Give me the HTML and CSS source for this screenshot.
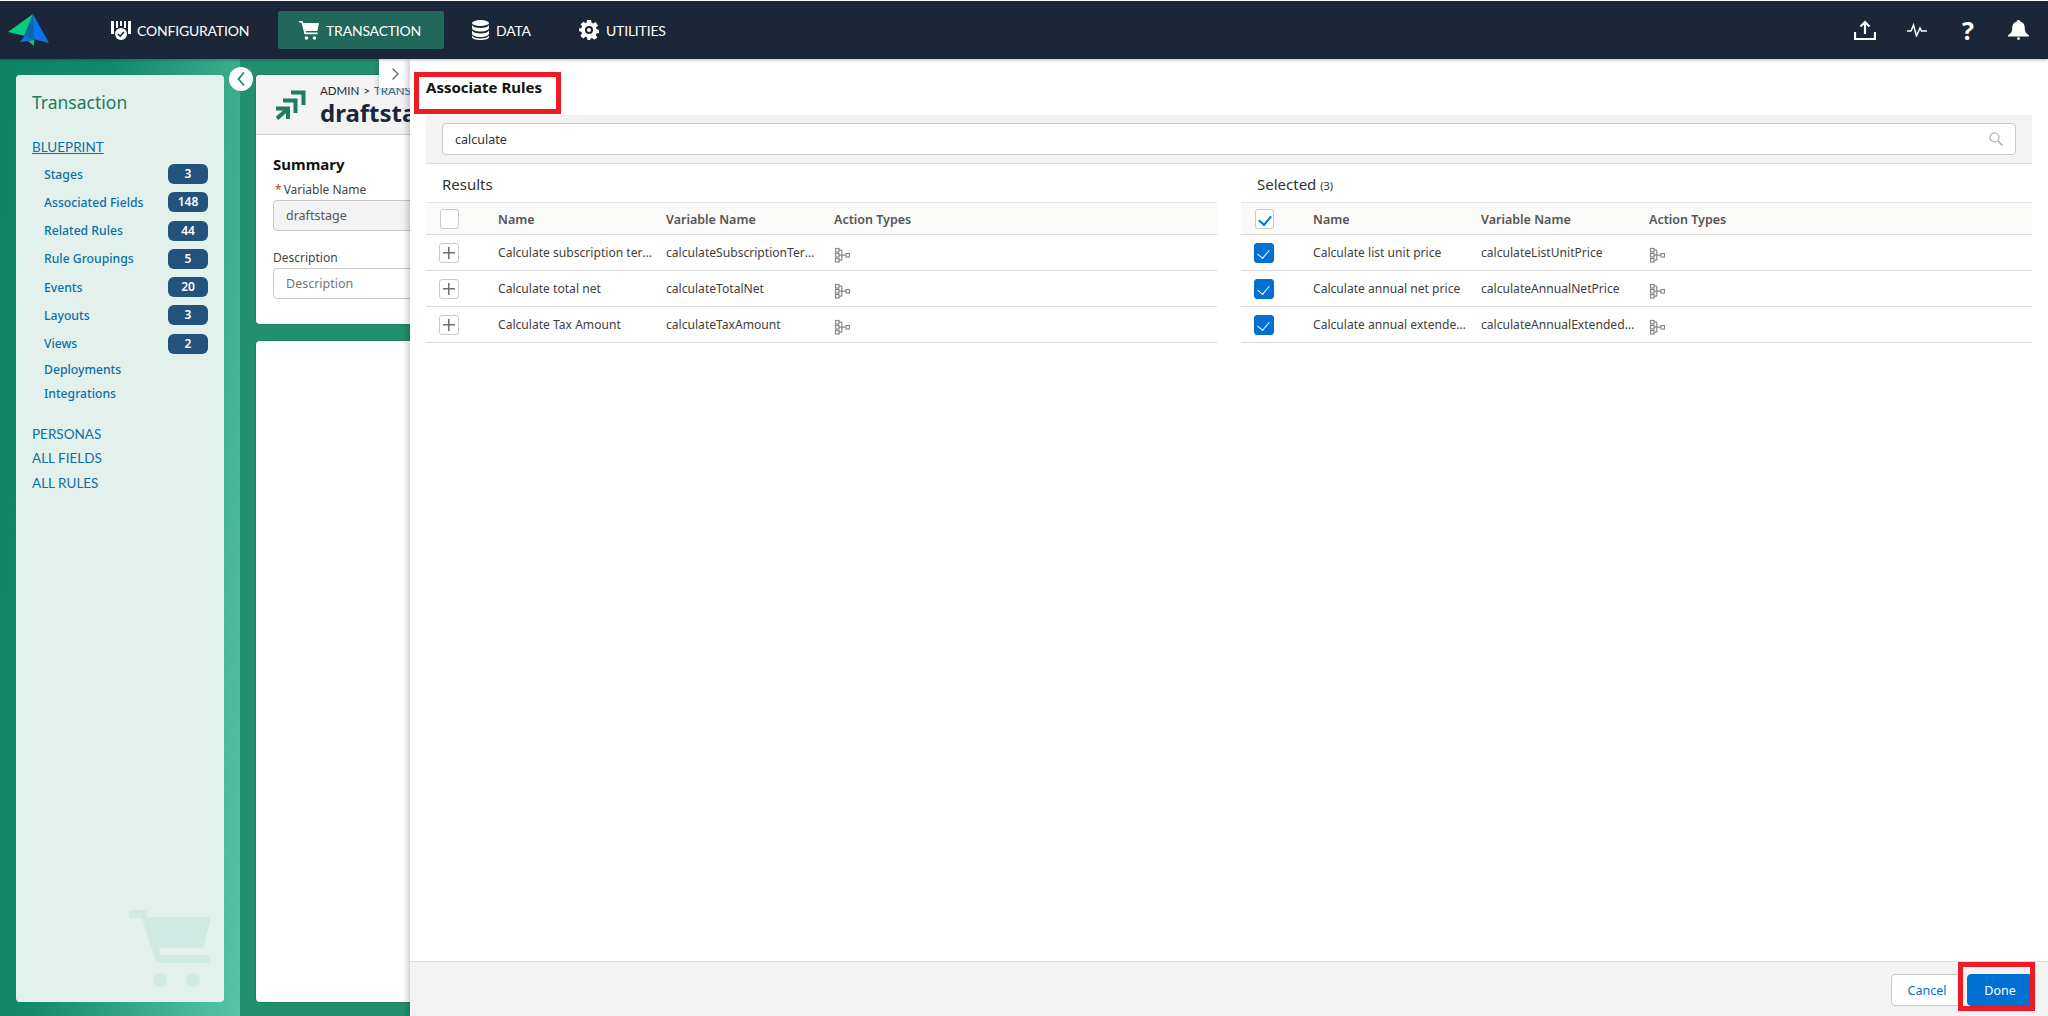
FILE: index.html
```html
<!DOCTYPE html>
<html lang="en">
<head>
  <meta charset="UTF-8" />
  <title>Associate Rules</title>
  <link rel="stylesheet" href="styles.css">
</head>
<body>

  <!-- Top bar -->
  <header class="topbar">
    <svg class="logo" width="42" height="33" viewBox="8 14 42 33">
      <polygon points="33,14 8,32 25,36" fill="#0dcb7d"/>
      <polygon points="33,14 49,43 33,39" fill="#0b72ee"/>
      <polygon points="33,14 24,36 25,38 33,42 34,39" fill="#0a67a3"/>
      <polygon points="25,36 20,42 28,41 33,39" fill="#0b72ee"/>
      <polygon points="28,41 34,46 34,40" fill="#0dcb7d"/>
    </svg>
    <nav class="main-nav">
      <a class="nav-item nav-config">
        <svg width="20" height="19" viewBox="0 0 20 19">
          <path fill="#fff" d="M0 0h3v13H0zM17 0h3v13h-3zM5 0h2v7H5zM9 0h2v5H9zM13 0h2v7h-2z"/>
          <circle cx="10" cy="13" r="6" fill="#fff"/>
          <path d="M7 13l2.200 2.200L13 11" fill="none" stroke="#1b2739" stroke-width="1.600"/>
        </svg>
        CONFIGURATION
      </a>
      <a class="nav-item nav-active">
        <svg width="20" height="19" viewBox="0 0 20 19">
          <path fill="#fff" d="M0 0h3.600l.7 2H20l-1.600 8H6.600l.4 1.600h11.600v1.600H5.600L2.400 1.600H0z"/>
          <circle cx="7.500" cy="17" r="1.800" fill="#fff"/>
          <circle cx="15.500" cy="17" r="1.800" fill="#fff"/>
        </svg>
        TRANSACTION
      </a>
      <a class="nav-item nav-data">
        <svg width="17" height="20" viewBox="0 0 17 20">
          <ellipse cx="8.500" cy="3" rx="8.500" ry="3" fill="#fff"/>
          <path fill="#fff" d="M0 5c1 2 4 3 8.500 3S16 7 17 5v3c0 2-4 3.500-8.500 3.500S0 10 0 8zM0 10.500c1 2 4 3 8.500 3s7.500-1 8.500-3v3c0 2-4 3.500-8.500 3.500S0 15.500 0 13.500zM0 15.500c1 2 4 3 8.500 3s7.500-1 8.500-3V17c0 2-4 3-8.500 3S0 19 0 17z"/>
        </svg>
        DATA
      </a>
      <a class="nav-item nav-util">
        <svg width="20" height="20" viewBox="0 0 20 20">
          <path fill="#fff" fill-rule="evenodd" d="M8 0h4l.6 2.800 1.500.7L16.600 2l2.400 3.400-2 2 .3 1.600L20 10v3l-2.700.6-.6 1.500 1.600 2.400-3 2.200-2-1.800-1.500.4L11 20H8.600l-.7-2.700-1.500-.5-2.200 1.700-2.800-2.600 1.600-2.300-.6-1.500L0 11V8.500l2.500-.6.600-1.500-1.500-2.200L4.400 1.700l2.200 1.500 1-.4zM10 6a4 4 0 1 0 0 8 4 4 0 0 0 0-8zm0 2a2 2 0 1 1 0 4 2 2 0 0 1 0-4z"/>
        </svg>
        UTILITIES
      </a>
    </nav>
    <div class="top-actions">
      <svg width="22" height="20" viewBox="0 0 22 20">
        <path d="M11 14V2M6.500 6.500L11 2l4.500 4.500M1 12v7h20v-7" fill="none" stroke="#fff" stroke-width="2.200"/>
      </svg>
      <svg width="20" height="14" viewBox="0 0 20 14">
        <path d="M0 8h4l2.500-6 3 11 3.500-8 1.500 3H20" fill="none" stroke="#fff" stroke-width="1.500"/>
      </svg>
      <span class="help-mark">?</span>
      <svg width="21" height="20" viewBox="0 0 21 20">
        <path fill="#fff" d="M10.500 0c1 0 1.700.7 1.800 1.500 3 .8 4.500 3.200 4.500 6.500 0 3.500 1 5 4.200 7.500v1H0v-1C3.200 13 4.200 11.500 4.200 8c0-3.300 1.500-5.700 4.500-6.500C8.800.7 9.500 0 10.500 0z"/>
        <circle cx="10.500" cy="18.600" r="1.400" fill="#fff"/>
      </svg>
    </div>
  </header>

  <div class="page">
    <!-- Left column -->
    <aside class="side-wrap">
      <div class="side-panel">
        <h2 class="side-title">Transaction</h2>
        <a class="side-head side-head-on">BLUEPRINT</a>
        <ul class="side-list">
          <li><a>Stages</a><span class="count">3</span></li>
          <li><a>Associated Fields</a><span class="count">148</span></li>
          <li><a>Related Rules</a><span class="count">44</span></li>
          <li><a>Rule Groupings</a><span class="count">5</span></li>
          <li><a>Events</a><span class="count">20</span></li>
          <li><a>Layouts</a><span class="count">3</span></li>
          <li><a>Views</a><span class="count">2</span></li>
        </ul>
        <a class="side-link">Deployments</a>
        <a class="side-link">Integrations</a>
        <div class="side-heads">
          <a class="side-head">PERSONAS</a>
          <a class="side-head">ALL FIELDS</a>
          <a class="side-head">ALL RULES</a>
        </div>
        <svg class="side-cart" width="82" height="77" viewBox="0 0 82 77">
          <path fill="#cfeae2" d="M3 0h11a4 4 0 0 1 4 3l1 4h63l-7 28a4 4 0 0 1-4 3H30l2 7h45a4 4 0 0 1 0 8H32a6 6 0 0 1-6-4L13 8H3a4 4 0 0 1 0-8z"/>
          <circle cx="31" cy="70" r="7" fill="#cfeae2"/>
          <circle cx="64" cy="70" r="7" fill="#cfeae2"/>
        </svg>
      </div>
    </aside>

    <!-- Blueprint stage, mostly behind the drawer -->
    <main class="content">
      <section class="card card-top">
        <div class="card-head">
          <svg width="31" height="31" viewBox="0 0 31 31">
            <path d="M16 3.500H28.500V16M8 11.500H20.500V24M1 19.500H13V30M2 29.500L12 20.500" fill="none" stroke="#1f7a62" stroke-width="4"/>
          </svg>
          <div class="head-text">
            <div class="crumbs"><span>ADMIN</span><i>&gt;</i><a>TRANSACTION</a></div>
            <h1 class="stage-name">draftstage</h1>
          </div>
        </div>
        <div class="card-body">
          <h3 class="summary">Summary</h3>
          <label class="field-label first"><span class="req">*</span>Variable Name</label>
          <input class="field field-off" value="draftstage" readonly>
          <label class="field-label">Description</label>
          <input class="field" placeholder="Description">
        </div>
      </section>
      <section class="card card-bottom"></section>
    </main>
  </div>

  <!-- Drawer -->
  <button class="collapse-btn">
    <svg width="12" height="18" viewBox="0 0 12 18"><path d="M9 2.500L3.500 9 9 15.500" fill="none" stroke="#1f8f72" stroke-width="1.800"/></svg>
  </button>
  <div class="drawer-tab">
    <svg width="10" height="14" viewBox="0 0 10 14"><path d="M2.500 1.500L8 7l-5.500 5.500" fill="none" stroke="#666" stroke-width="1.300"/></svg>
  </div>
  <div class="drawer">
    <div class="drawer-title">Associate Rules</div>
    <div class="search-band">
      <div class="search-box">
        <input class="search-input" value="calculate">
        <svg width="14" height="14" viewBox="0 0 14 14">
          <circle cx="5.500" cy="5.500" r="4.500" fill="none" stroke="#b0b0b0" stroke-width="1.200"/>
          <path d="M9 9l4.500 4.500" stroke="#b0b0b0" stroke-width="1.400"/>
        </svg>
      </div>
    </div>
    <div class="lists">
      <div class="list-col">
        <div class="list-title">Results</div>
        <table class="rules">
          <thead>
            <tr><th><span class="check"></span></th><th>Name</th><th>Variable Name</th><th>Action Types</th></tr>
          </thead>
          <tbody>
            <tr>
              <td><span class="plus"></span></td>
              <td><div class="clip">Calculate subscription term length</div></td>
              <td><div class="clip">calculateSubscriptionTermLength</div></td>
              <td><svg class="act" viewBox="0 0 16 16"><use href="#flow"/></svg></td>
            </tr>
            <tr>
              <td><span class="plus"></span></td>
              <td><div class="clip">Calculate total net</div></td>
              <td><div class="clip">calculateTotalNet</div></td>
              <td><svg class="act" viewBox="0 0 16 16"><use href="#flow"/></svg></td>
            </tr>
            <tr>
              <td><span class="plus"></span></td>
              <td><div class="clip">Calculate Tax Amount</div></td>
              <td><div class="clip">calculateTaxAmount</div></td>
              <td><svg class="act" viewBox="0 0 16 16"><use href="#flow"/></svg></td>
            </tr>
          </tbody>
        </table>
      </div>
      <div class="list-col">
        <div class="list-title">Selected <small>(3)</small></div>
        <table class="rules">
          <thead>
            <tr><th><span class="check check-all"></span></th><th>Name</th><th>Variable Name</th><th>Action Types</th></tr>
          </thead>
          <tbody>
            <tr>
              <td><span class="check check-on"></span></td>
              <td><div class="clip">Calculate list unit price</div></td>
              <td><div class="clip">calculateListUnitPrice</div></td>
              <td><svg class="act" viewBox="0 0 16 16"><use href="#flow"/></svg></td>
            </tr>
            <tr>
              <td><span class="check check-on"></span></td>
              <td><div class="clip">Calculate annual net price</div></td>
              <td><div class="clip">calculateAnnualNetPrice</div></td>
              <td><svg class="act" viewBox="0 0 16 16"><use href="#flow"/></svg></td>
            </tr>
            <tr>
              <td><span class="check check-on"></span></td>
              <td><div class="clip">Calculate annual extended price</div></td>
              <td><div class="clip">calculateAnnualExtendedPrice</div></td>
              <td><svg class="act" viewBox="0 0 16 16"><use href="#flow"/></svg></td>
            </tr>
          </tbody>
        </table>
      </div>
    </div>
    <div class="drawer-foot">
      <button class="btn">Cancel</button>
      <button class="btn btn-brand">Done</button>
    </div>
    <!-- Red callouts drawn over the screenshot -->
    <div class="callout callout-title"></div>
    <div class="callout callout-done"></div>
  </div>

  <svg class="defs">
    <defs>
      <g id="flow" fill="none" stroke="#888" stroke-width="1.200">
        <rect x="1.500" y="1.500" width="3.500" height="3.500"/>
        <rect x="1.500" y="6.500" width="3.500" height="3.500"/>
        <rect x="1.500" y="11.500" width="3.500" height="3.500"/>
        <rect x="12" y="6.500" width="3.500" height="3.500"/>
        <path d="M5 8.200H12M7.800 3.200v10M5 3.200h2.800M5 13.200h2.800"/>
      </g>
    </defs>
  </svg>

</body>
</html>
```

FILE: styles.css
```css
* {
  box-sizing: border-box;
}

html, body {
  margin: 0;
  height: 1016px;
  overflow: hidden;
}

body {
  font-family: "Noto Sans", "Open Sans", sans-serif;
  font-size: 13px;
  color: #333;
  background: #fff;
  padding-top: 1px;
  position: relative;
}

.defs {
  position: absolute;
  width: 0;
  height: 0;
}

/* Top bar */
.topbar {
  height: 58px;
  background: #1b2739;
  display: flex;
  align-items: center;
  box-shadow: 0 1px 3px #00000044;
  position: relative;
  z-index: 3;
}

.logo {
  margin-left: 8px;
  flex: none;
}

.main-nav {
  display: flex;
  align-items: center;
  margin-left: 61px;
}

.nav-item {
  display: flex;
  align-items: center;
  gap: 7px;
  height: 38px;
  color: #fff;
  font-family: Lato, "Open Sans", sans-serif;
  font-size: 14px;
  letter-spacing: -0.2px;
}

.nav-config {
  width: 167px;
  gap: 6px;
}

.nav-active {
  width: 166px;
  padding-left: 21px;
  background: #21675a;
  border-radius: 2px;
}

.nav-data {
  width: 107px;
  margin-left: 28px;
}

.top-actions {
  margin-left: auto;
  margin-right: 19px;
  display: flex;
  align-items: center;
  gap: 31px;
}

.help-mark {
  color: #fff;
  font-family: "Open Sans", sans-serif;
  font-weight: 700;
  font-size: 25px;
  line-height: 20px;
  width: 15px;
  margin-left: 4px;
}

/* Page under the bar */
.page {
  display: flex;
  height: 957px;
}

.side-wrap {
  width: 240px;
  flex: none;
  padding: 16px 16px 14px;
  background: linear-gradient(95deg, #0e8464 0%, #128a6a 35%, #57c5a5 100%);
}

.side-panel {
  height: 100%;
  background: #e2f1ec;
  border-radius: 4px;
  padding: 15px 16px 0;
  position: relative;
}

.side-title {
  margin: 0 0 22px;
  font-size: 17.500px;
  line-height: 24px;
  font-weight: 400;
  color: #1f7a5e;
}

.side-head {
  display: block;
  font-family: Lato, sans-serif;
  font-size: 13.500px;
  line-height: 22px;
  color: #0e6fa5;
}

.side-head-on {
  text-decoration: underline;
  margin-bottom: 6px;
}

.side-list {
  list-style: none;
  margin: 0 0 4px;
  padding: 0 0 0 12px;
  display: flex;
  flex-direction: column;
  gap: 8.300px;
}

.side-list li {
  display: flex;
  justify-content: space-between;
  align-items: center;
  height: 20px;
}

.side-list a,
.side-link {
  color: #0e6fa5;
  font-size: 12.200px;
  font-weight: 500;
}

.side-link {
  display: block;
  line-height: 24px;
  padding-left: 12px;
}

.count {
  width: 40px;
  height: 20px;
  border-radius: 6px;
  background: #23527c;
  color: #fff;
  font-size: 12px;
  font-weight: 600;
  text-align: center;
  line-height: 20px;
}

.side-heads {
  margin-top: 16px;
}

.side-heads .side-head {
  line-height: 24.500px;
}

.side-cart {
  position: absolute;
  left: 113px;
  bottom: 15px;
}

.content {
  flex: 1;
  background: #21906f;
  padding: 16px;
  padding-bottom: 14px;
  display: flex;
  flex-direction: column;
  gap: 17px;
}

.card {
  background: #fff;
  border-radius: 4px;
  box-shadow: 0 0 2px #00000055;
}

.card-top {
  height: 249px;
}

.card-bottom {
  flex: 1;
}

.card-head {
  height: 60px;
  background: #f3f3f3;
  border-bottom: 1px solid #cfcfcf;
  border-radius: 4px 4px 0 0;
  display: flex;
  align-items: center;
  padding-left: 19px;
  gap: 14px;
}

.head-text {
  padding-top: 3px;
}

.crumbs {
  font-family: Lato, sans-serif;
  font-size: 11.500px;
  line-height: 14px;
  color: #1b2739;
}

.crumbs i {
  font-style: normal;
  margin: 0 4px;
}

.crumbs a {
  color: #2a6f9e;
}

.stage-name {
  margin: 0;
  font-size: 24px;
  line-height: 30px;
  font-weight: 700;
  color: #1b2739;
}

.card-body {
  padding: 19px 17px 0;
}

.summary {
  margin: 0;
  font-size: 15px;
  line-height: 20px;
  font-weight: 700;
  color: #111;
}

.field-label {
  display: block;
  margin-top: 19px;
  font-size: 12px;
  line-height: 16px;
  color: #444;
}

.field-label.first {
  margin-top: 8px;
}

.req {
  color: #c23934;
  margin: 0 2px;
}

.field {
  display: block;
  width: 600px;
  height: 31px;
  margin-top: 2px;
  padding: 0 12px;
  border: 1px solid #c9c9c9;
  border-radius: 4px;
  font: inherit;
  font-size: 12.500px;
  color: #555;
  background: #fff;
}

.field-off {
  background: #f3f3f3;
}

/* Drawer over the page */
.collapse-btn {
  position: absolute;
  left: 229px;
  top: 67px;
  width: 24px;
  height: 24px;
  padding: 0;
  border: none;
  border-radius: 50%;
  background: #fff;
  display: flex;
  align-items: center;
  justify-content: center;
  z-index: 2;
}

.drawer-tab {
  position: absolute;
  left: 379px;
  top: 59px;
  width: 32px;
  height: 29px;
  background: #fff;
  display: flex;
  align-items: center;
  justify-content: center;
  padding-top: 1px;
  box-shadow: -2px 2px 4px #00000022;
  z-index: 2;
}

.drawer {
  position: absolute;
  left: 410px;
  top: 59px;
  right: 0;
  bottom: 0;
  background: #fff;
  display: flex;
  flex-direction: column;
  box-shadow: -3px 0 6px #00000033;
  z-index: 2;
}

.drawer-title {
  height: 56px;
  padding: 17px 16px 0;
  font-size: 15px;
  line-height: 22px;
  font-weight: 700;
  color: #111;
}

.search-band {
  margin: 0 16px;
  height: 49px;
  padding: 8px 16px;
  background: #f3f3f3;
  border-bottom: 1px solid #dcdcdc;
}

.search-box {
  height: 32px;
  display: flex;
  align-items: center;
  padding: 0 12px;
  background: #fff;
  border: 1px solid #c9c9c9;
  border-radius: 4px;
}

.search-input {
  flex: 1;
  border: none;
  outline: none;
  padding: 0;
  font: inherit;
  font-size: 12.500px;
  color: #333;
}

.lists {
  flex: 1;
  display: flex;
  gap: 24px;
  padding: 0 16px;
}

.list-col {
  width: 791px;
}

.list-title {
  height: 38px;
  padding: 9px 16px 0;
  font-size: 15px;
  line-height: 22px;
  color: #333;
}

.list-title small {
  font-size: 11px;
}

.rules {
  width: 100%;
  table-layout: fixed;
  border-collapse: collapse;
  border-top: 1px solid #e5e5e5;
}

.rules th:nth-child(1), .rules td:nth-child(1) {
  width: 72px;
  padding-left: 13px;
}

.rules th:nth-child(2), .rules td:nth-child(2),
.rules th:nth-child(3), .rules td:nth-child(3) {
  width: 168px;
}

.rules th {
  height: 32px;
  padding: 2px 0 0;
  background: #fafaf9;
  text-align: left;
  font-size: 12.500px;
  font-weight: 600;
  color: #555;
  border-bottom: 1px solid #dddbda;
}

.rules th:first-child {
  padding-top: 0;
}

.rules td {
  height: 36px;
  padding: 0;
  border-bottom: 1px solid #dddbda;
  font-size: 12.100px;
  color: #3e3e3c;
}

.clip {
  width: 156px;
  overflow: hidden;
  white-space: nowrap;
  text-overflow: ellipsis;
}

.act {
  display: block;
  width: 16px;
  height: 16px;
  position: relative;
  top: 2px;
}

.check {
  display: block;
  width: 19px;
  height: 20px;
  margin-left: 1px;
  background: #fff;
  border: 1px solid #c9c9c9;
  border-radius: 3px;
  position: relative;
}

.check-on {
  margin-left: 0;
  width: 20px;
  background: #0070d2;
  border-color: #0070d2;
}

.check-all::after,
.check-on::after {
  content: "";
  position: absolute;
  left: 5px;
  top: 3px;
  width: 6px;
  height: 10px;
  border: solid #0070d2;
  border-width: 0 2px 2px 0;
  transform: rotate(40deg);
}

.check-on::after {
  border-color: #fff;
  border-width: 0 1.500px 1.500px 0;
}

.plus {
  display: block;
  width: 20px;
  height: 20px;
  border: 1px solid #c9c9c9;
  border-radius: 3px;
  background:
    linear-gradient(#706e6b, #706e6b) center / 12px 1.500px no-repeat,
    linear-gradient(#706e6b, #706e6b) center / 1.500px 12px no-repeat;
}

.drawer-foot {
  height: 55px;
  background: #f3f3f3;
  border-top: 1px solid #dcdcdc;
  display: flex;
  justify-content: flex-end;
  align-items: flex-start;
  gap: 4px;
  padding: 12px 15px 0;
}

.btn {
  width: 72px;
  height: 32px;
  padding: 0;
  font: inherit;
  font-size: 12.500px;
  color: #0070d2;
  background: #fff;
  border: 1px solid #c9c9c9;
  border-radius: 4px;
}

.btn-brand {
  width: 66px;
  background: #0070d2;
  border-color: #0070d2;
  color: #fff;
}

.callout {
  position: absolute;
  border: 5px solid #ed1c24;
}

.callout-title {
  left: 4px;
  top: 13px;
  width: 147px;
  height: 42px;
}

.callout-done {
  left: 1548px;
  top: 903px;
  width: 77px;
  height: 49px;
}
```
